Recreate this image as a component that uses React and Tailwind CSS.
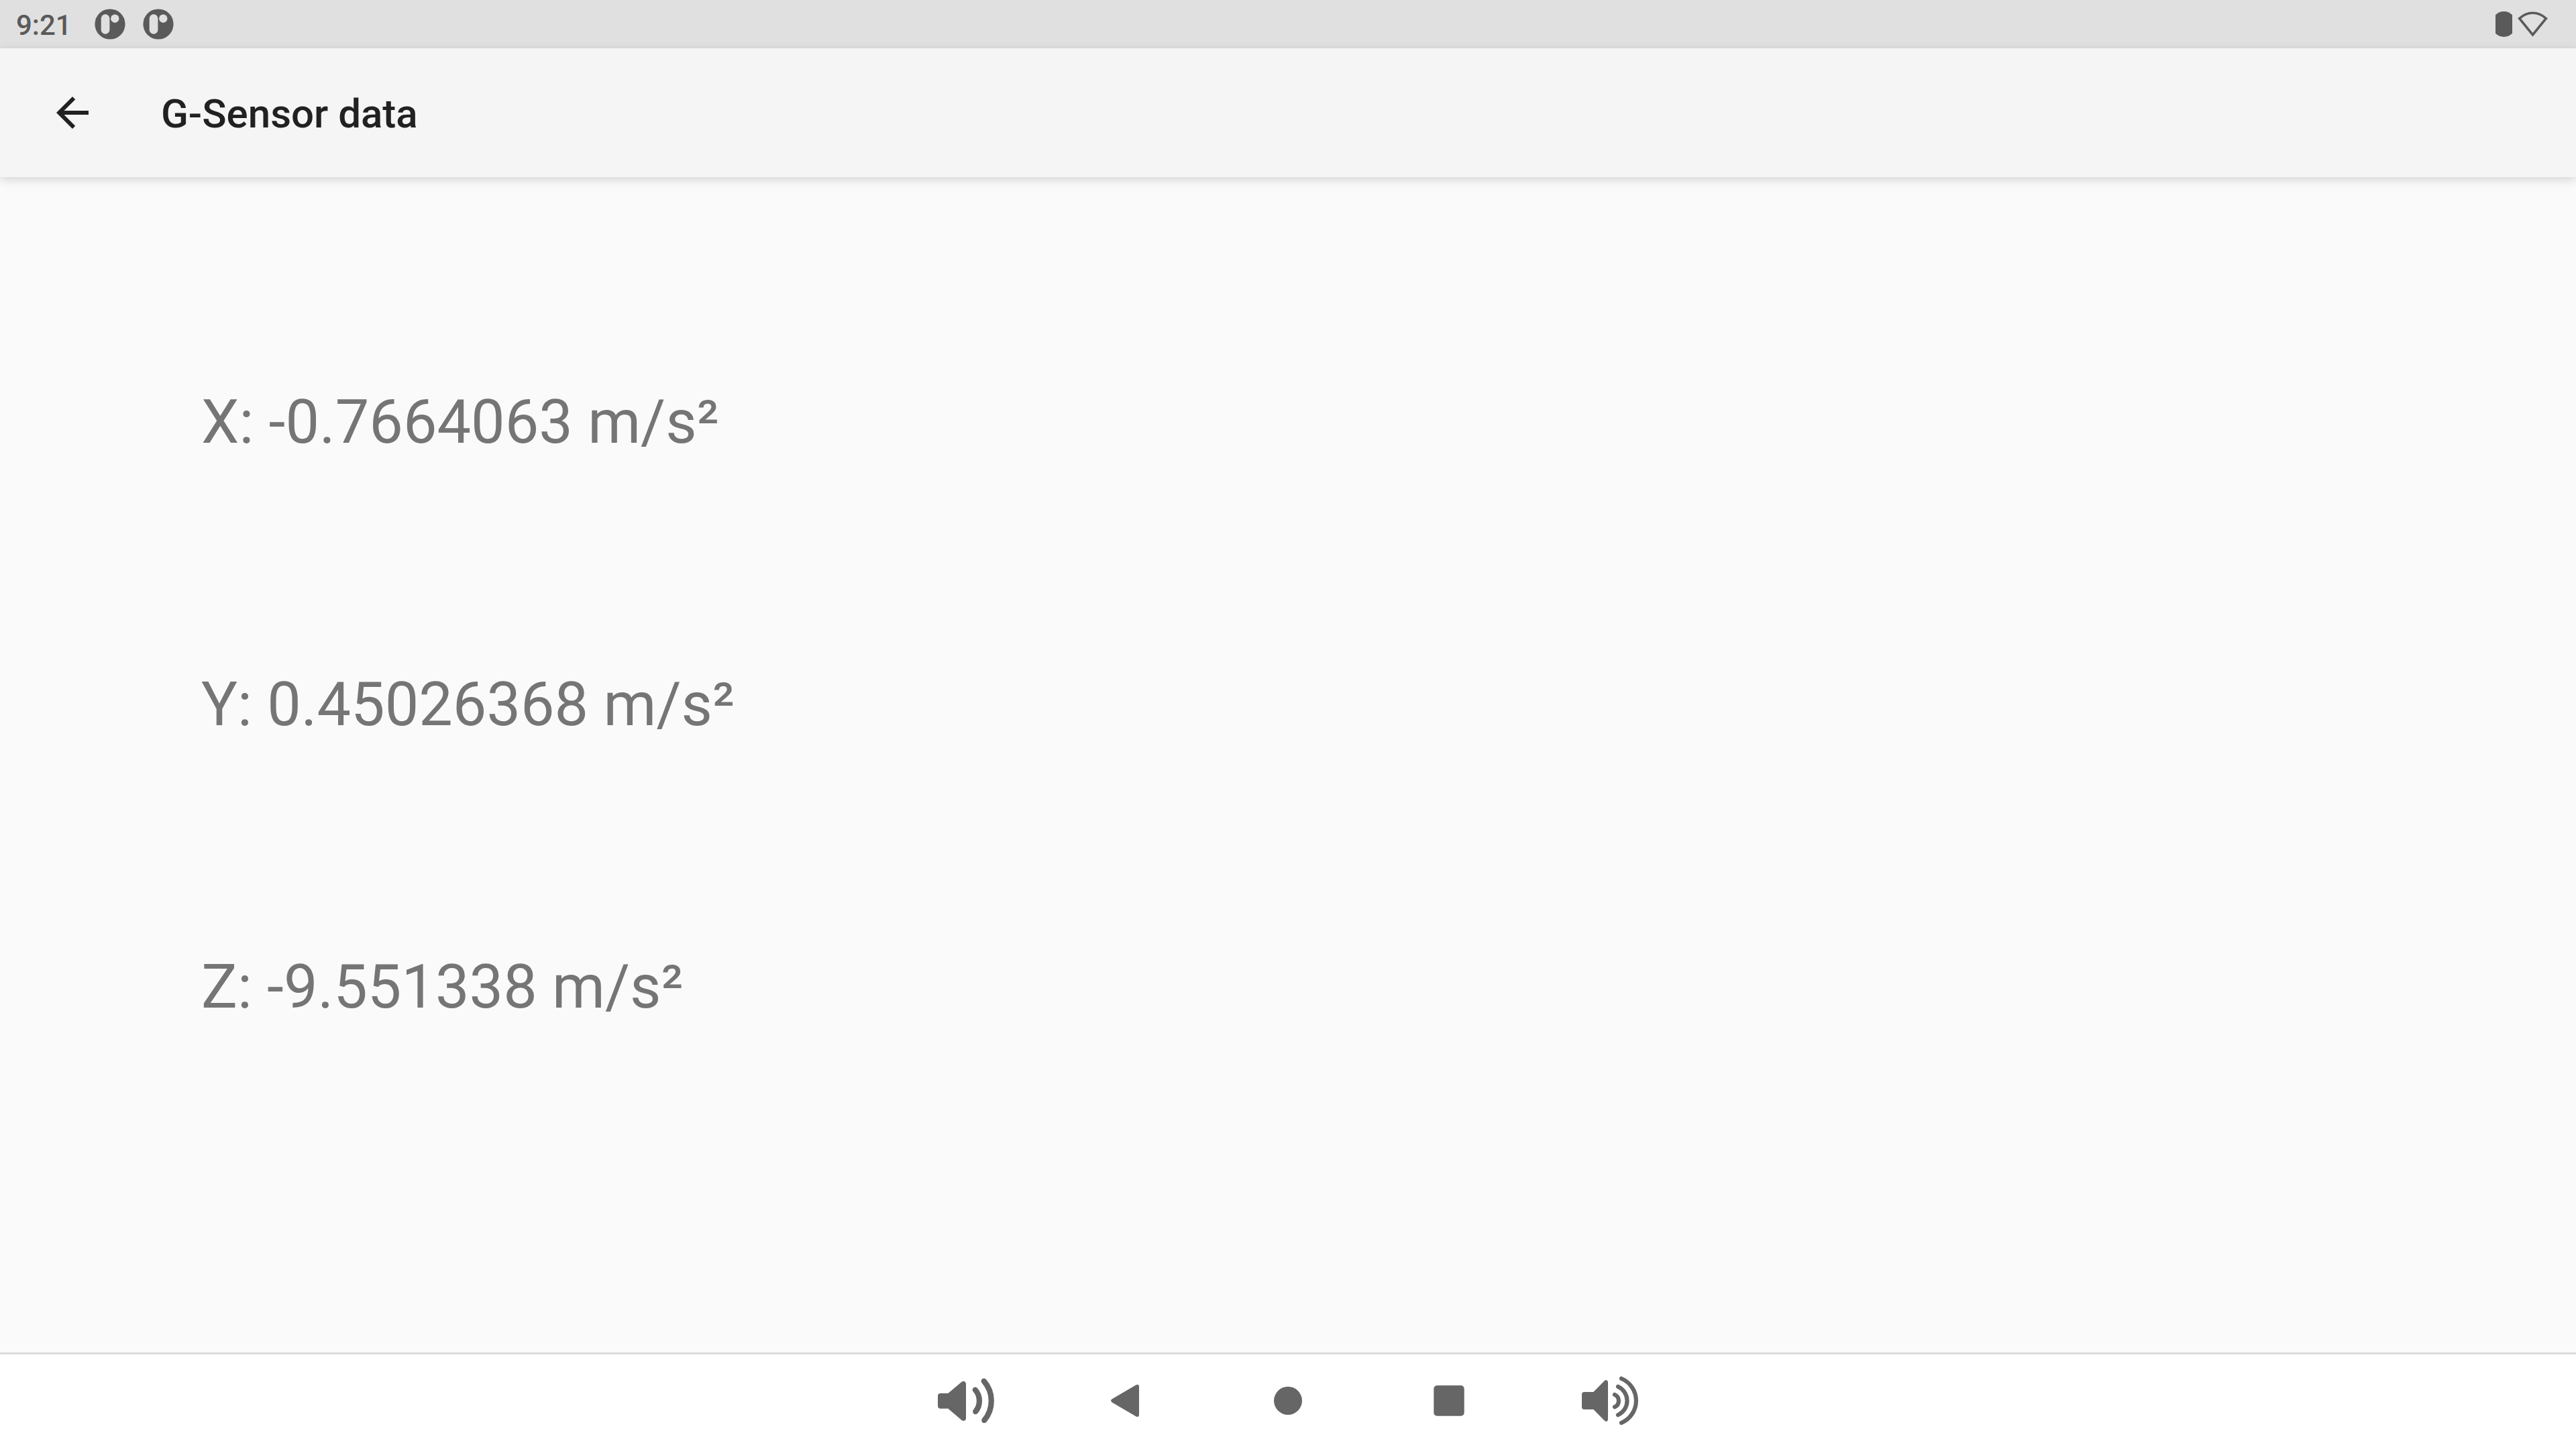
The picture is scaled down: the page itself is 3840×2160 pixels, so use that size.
const readings = [
  { axis: 'X', value: '-0.7664063' },
  { axis: 'Y', value: '0.45026368' },
  { axis: 'Z', value: '-9.551338' },
];

function NotificationIcon() {
  return (
    <svg className="size-12" viewBox="0 0 48 48" aria-hidden="true">
      <circle cx="24" cy="24" r="22.6" fill="#5a5a5a" />
      <rect x="10.7" y="9.3" width="12.7" height="29.4" rx="6.3" fill="#e0e0e0" />
      <circle cx="31.3" cy="15.7" r="6.2" fill="#e0e0e0" />
    </svg>
  );
}

function BatteryIcon() {
  return (
    <svg className="h-[38px] w-[25px]" viewBox="0 0 25 38" fill="#5a5a5a" aria-hidden="true">
      <path d="M0 5.2C3.6 1.8 8 0 12.5 0S21.4 1.8 25 5.2V32.8C21.4 36.2 17 38 12.5 38S3.6 36.2 0 32.8Z" />
    </svg>
  );
}

function WifiIcon() {
  return (
    <svg className="h-[38px] w-[45px]" viewBox="0 0 45 38" fill="none" stroke="#5a5a5a" strokeWidth="3.6" aria-hidden="true">
      <path d="M2.6 10.5C8.5 5 15.2 2.2 22.5 2.2S36.5 5 42.4 10.5L22.5 34.8Z" />
    </svg>
  );
}

function VolumeDownIcon() {
  return (
    <svg className="size-24" viewBox="0 0 96 96" fill="none" stroke="currentColor" strokeWidth="8.3" strokeLinecap="round" aria-hidden="true">
      <path
        d="M10 37H21.3L41.5 20C44.5 17.6 48 19.5 48 23V74C48 77.7 44.5 79.4 41.5 77L21.3 59.7H10Q6 59.7 6 55.7V41Q6 37 10 37Z"
        fill="currentColor"
        stroke="none"
      />
      <path d="M61.8 31.9A25 25 0 0 1 62.2 64.2" />
      <path d="M74.7 18.8A45 45 0 0 1 75.3 77.2" />
    </svg>
  );
}

function VolumeUpIcon() {
  return (
    <svg className="size-24" viewBox="0 0 96 96" fill="none" stroke="currentColor" strokeWidth="6.2" strokeLinecap="round" aria-hidden="true">
      <path
        d="M9.5 35H23.3L39.8 18.2C42 16 45 17.5 45 20.5V75.5C45 78.8 42 80 39.8 77.8L23.3 61H9.5Q6 61 6 57.5V38.5Q6 35 9.5 35Z"
        fill="currentColor"
        stroke="none"
      />
      <path d="M55 39A10 10 0 0 1 55 57.3" />
      <path d="M60 27A23.2 23.2 0 0 1 60 69.2" />
      <path d="M65 15A35.8 35.8 0 0 1 65 81" />
    </svg>
  );
}

function BackIcon() {
  return (
    <svg className="size-24" viewBox="0 0 96 96" fill="currentColor" aria-hidden="true">
      <path d="M25.7 45.6L61.5 24.6Q66 22.6 66 27.5V68.5Q66 73.4 61.5 71.4L25.7 50.4Q22.3 48 25.7 45.6Z" />
    </svg>
  );
}

function HomeIcon() {
  return (
    <svg className="size-24" viewBox="0 0 96 96" fill="currentColor" aria-hidden="true">
      <circle cx="48" cy="48" r="21" />
    </svg>
  );
}

function RecentsIcon() {
  return (
    <svg className="size-24" viewBox="0 0 96 96" fill="currentColor" aria-hidden="true">
      <rect x="25.3" y="25.3" width="45.4" height="45.4" rx="5" />
    </svg>
  );
}

const navItems = [
  { label: 'Volume down', Icon: VolumeDownIcon },
  { label: 'Back', Icon: BackIcon },
  { label: 'Home', Icon: HomeIcon },
  { label: 'Recent apps', Icon: RecentsIcon },
  { label: 'Volume up', Icon: VolumeUpIcon },
];

export default function App() {
  return (
    <div className="flex min-h-screen flex-col bg-[#fafafa] font-[Roboto,sans-serif]">
      <div className="flex h-[72px] items-center justify-between bg-[#e0e0e0] pr-[42px] pl-6 text-[#5a5a5a]">
        <div className="flex items-center">
          <time className="mr-[33px] pt-1 text-[42px] leading-[50px] font-medium">9:21</time>
          <div className="flex gap-6">
            <NotificationIcon />
            <NotificationIcon />
          </div>
        </div>
        <div className="flex items-center gap-2">
          <BatteryIcon />
          <WifiIcon />
        </div>
      </div>

      <header className="flex h-48 items-center gap-24 bg-[#f5f5f5] px-[72px] text-[#212121] shadow-[0_4px_14px_rgba(0,0,0,0.15)]">
        <button type="button" aria-label="Navigate up">
          <svg className="size-[72px]" viewBox="0 0 24 24" fill="currentColor" aria-hidden="true">
            <path d="M20 11H7.83l5.59-5.59L12 4l-8 8 8 8 1.41-1.41L7.83 13H20v-2z" />
          </svg>
        </button>
        <h1 className="pt-1 text-[60px] leading-[70px] font-medium">G-Sensor data</h1>
      </header>

      <main className="flex flex-1 flex-col gap-[315px] px-[300px] pt-[313px] pb-24 text-[90px] leading-[106px] text-[#757575]">
        {readings.map(({ axis, value }) => (
          <p key={axis}>
            {axis}: {value} m/s²
          </p>
        ))}
      </main>

      <nav className="flex h-36 items-center justify-center bg-white text-[#666666] shadow-[inset_0_3px_0_#dcdcdc]">
        {navItems.map(({ label, Icon }) => (
          <button key={label} type="button" aria-label={label} className="flex w-60 justify-center">
            <Icon />
          </button>
        ))}
      </nav>
    </div>
  );
}
